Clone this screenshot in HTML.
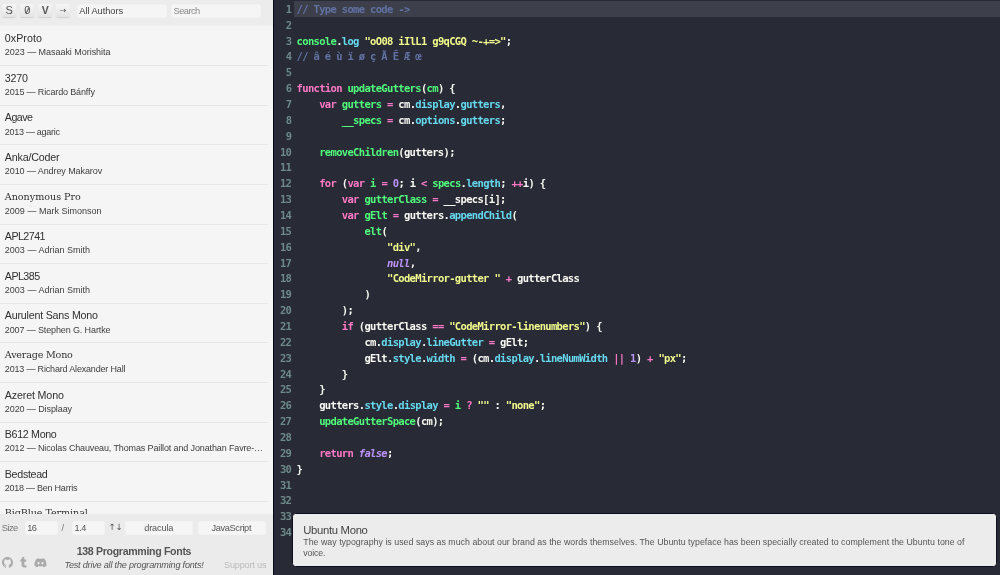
<!DOCTYPE html>
<html lang="en"><head><meta charset="utf-8"><title>138 Programming Fonts</title>
<style>
*{box-sizing:border-box;margin:0;padding:0}
html,body{width:1000px;height:575px;overflow:hidden;background:#282a36;font-family:"Liberation Sans",sans-serif;color:#3a3a3a}
#side{position:absolute;left:0;top:0;width:273px;height:575px;background:#f5f5f5;overflow:hidden}
#top{position:absolute;left:0;top:0;width:273px;height:27px;background:linear-gradient(#ececec 24.2px,#f5f5f5 27px);z-index:2}
.btn{position:absolute;top:4.3px;height:13px;width:14.4px;background:linear-gradient(#f6f6f6,#e4e4e4);border-radius:2px;box-shadow:0 1px 1px rgba(0,0,0,.12);font-size:11px;line-height:13px;text-align:center;color:#555}
.btn.arr{font-family:"DejaVu Sans",sans-serif;font-size:8px;line-height:14.4px}
.inp{position:absolute;top:4px;height:14.2px;background:#f5f5f5;border-radius:1.5px;font-size:9.3px;line-height:14px;padding-left:2.8px;color:#444;box-shadow:inset 0 0 1px rgba(0,0,0,.12)}
#list{position:absolute;left:0;top:26.5px;width:268px;list-style:none}
#list li{height:39.61px;border-bottom:1px solid #e6e6e6;padding:4.6px 0 0 4.8px;white-space:nowrap;overflow:hidden;text-overflow:ellipsis}
#list b{display:block;font-weight:normal;font-size:10.7px;line-height:14px;color:#303030}
#list i{display:block;font-style:normal;font-size:9px;line-height:12px;margin-top:1.3px;color:#3e3e3e;overflow:hidden;text-overflow:ellipsis;width:262px}
#foot{position:absolute;left:0;top:514.3px;width:273px;height:61px;background:#ebebeb;box-shadow:0 -.5px 1.5px rgba(0,0,0,.05)}
#ed{position:absolute;left:273px;top:0;width:727px;height:575px;background:linear-gradient(90deg,#07071b 1.2px,#282a36 1.2px);padding:1px 0 0 1.2px}
.ln{position:relative;height:15.86px;width:727px}
.ln.act:before{content:"";position:absolute;left:20px;right:0;top:0;bottom:0;background:rgba(255,255,255,.1)}
.no{position:absolute;left:0;top:.8px;width:17.1px;text-align:right;font-family:"DejaVu Sans Mono","Liberation Mono",monospace;font-size:10.5px;letter-spacing:-.67px;line-height:15.84px;color:#6d8a88;font-weight:bold}
pre{position:absolute;left:22.4px;top:.8px;font-family:"DejaVu Sans Mono","Liberation Mono",monospace;font-size:10.5px;letter-spacing:-.67px;line-height:15.84px;color:#f8f8f2;font-weight:bold}
.c{color:#6272a4}.k,.o{color:#ff79c6}.d{color:#50fa7b}.p{color:#66d9ef}.s{color:#f1fa8c}.n{color:#bd93f9}.a{color:#bd93f9;font-style:italic}
#tip{position:absolute;left:291.6px;top:513px;width:705.3px;height:54px;background:#ececec;border:1.4px solid #0d0f1e;border-radius:3.5px;padding:10.2px 0 0 10.7px}
#tip h4{font-weight:normal;font-size:11.3px;line-height:13px;color:#444}
#tip p{font-size:8.8px;line-height:11.1px;color:#555;width:675px;margin-top:-.2px}

.lbl{position:absolute;top:7px;font-size:9.4px;line-height:14px;color:#777}
.fin{position:absolute;top:6.8px;height:14.2px;background:#f5f5f5;border-radius:1.5px;font-size:9.2px;line-height:14.2px;text-align:center;color:#555;box-shadow:inset 0 0 1px rgba(0,0,0,.1)}
.ic{position:absolute;fill:#aaa}
#ttl{position:absolute;left:76.7px;white-space:nowrap;top:29.6px;font-weight:bold;font-size:10.6px;line-height:14px;color:#555}
#sub{position:absolute;left:64.4px;white-space:nowrap;top:44.6px;font-style:italic;font-size:9.1px;line-height:12px;color:#555}
#sup{position:absolute;left:224px;white-space:nowrap;top:44.9px;font-size:9.2px;line-height:12px;color:#bbb}
.btn.zero:after{content:"";position:absolute;left:6.8px;top:3.2px;width:.8px;height:7px;background:#555;transform:rotate(28deg)}
#list b.sf{font-family:"DejaVu Serif",serif;font-size:9.6px}
#wrap{position:absolute;left:0;top:0;width:1000px;height:575px;will-change:transform;background:#282a36}
</style></head><body><div id="wrap">
<div id="side">
<div id="top">
<span class="btn" style="left:2px">S</span><span class="btn zero" style="left:20px">0</span><span class="btn" style="left:38px;font-weight:bold;font-size:10.5px">V</span><span class="btn arr" style="left:56px">→</span>
<span class="inp" style="left:76.5px;width:90.2px"><span id="f_aa" style="letter-spacing:-0.065px">All Authors</span></span><span class="inp" style="left:170.7px;width:90px;color:#8a8a8a"><span id="f_se" style="letter-spacing:-0.55px">Search</span></span>
</div>
<ul id="list">
<li><b><span id="t0" style="letter-spacing:0.043px">0xProto</span></b><i><span id="s0" style="letter-spacing:-0.037px">2023 — Masaaki Morishita</span></i></li>
<li><b><span id="t1" style="letter-spacing:-0.227px">3270</span></b><i><span id="s1" style="letter-spacing:-0.14px">2015 — Ricardo Bánffy</span></i></li>
<li><b><span id="t2" style="letter-spacing:-0.55px">Agave</span></b><i><span id="s2" style="letter-spacing:-0.279px">2013 — agaric</span></i></li>
<li><b><span id="t3" style="letter-spacing:-0.184px">Anka/Coder</span></b><i><span id="s3" style="letter-spacing:-0.083px">2010 — Andrey Makarov</span></i></li>
<li><b class="sf"><span id="t4" style="letter-spacing:-0.019px">Anonymous Pro</span></b><i><span id="s4" style="letter-spacing:0.013px">2009 — Mark Simonson</span></i></li>
<li><b><span id="t5" style="letter-spacing:-0.55px">APL2741</span></b><i><span id="s5" style="letter-spacing:0.013px">2003 — Adrian Smith</span></i></li>
<li><b><span id="t6" style="letter-spacing:-0.55px">APL385</span></b><i><span id="s6" style="letter-spacing:0.013px">2003 — Adrian Smith</span></i></li>
<li><b><span id="t7" style="letter-spacing:-0.214px">Aurulent Sans Mono</span></b><i><span id="s7" style="letter-spacing:-0.124px">2007 — Stephen G. Hartke</span></i></li>
<li><b class="sf"><span id="t8" style="letter-spacing:-0.207px">Average Mono</span></b><i><span id="s8" style="letter-spacing:-0.174px">2013 — Richard Alexander Hall</span></i></li>
<li><b><span id="t9" style="letter-spacing:-0.149px">Azeret Mono</span></b><i><span id="s9" style="letter-spacing:-0.089px">2020 — Displaay</span></i></li>
<li><b><span id="t10" style="letter-spacing:-0.334px">B612 Mono</span></b><i><span id="s10" style="letter-spacing:-0.13px">2012 — Nicolas Chauveau, Thomas Paillot and Jonathan Favre-Lamarine</span></i></li>
<li><b><span id="t11" style="letter-spacing:-0.31px">Bedstead</span></b><i><span id="s11" style="letter-spacing:-0.247px">2018 — Ben Harris</span></i></li>
<li><b class="sf"><span id="t12" style="letter-spacing:-0.083px">BigBlue Terminal</span></b><i><span id="s12" style="letter-spacing:0px">2014 — VileR</span></i></li>
</ul>
<div id="foot">
<span class="lbl" id="f_size" style="left:1.7px;letter-spacing:-0.55px">Size</span>
<span class="fin" style="left:24.5px;width:33px;text-align:left;padding-left:2.8px"><span id="f_16" style="letter-spacing:-0.55px">16</span></span>
<span class="lbl" style="left:61.5px">/</span>
<span class="fin" style="left:71.8px;width:33px;text-align:left;padding-left:2.8px"><span id="f_14" style="letter-spacing:-0.55px">1.4</span></span>
<span class="lbl" style="left:108.6px;top:6.2px;color:#555;font-family:'DejaVu Sans',sans-serif;font-size:8.6px;letter-spacing:-0.3px">↑↓</span>
<span class="fin" style="left:125px;width:68px;text-align:left;padding-left:19.2px"><span id="f_dr" style="letter-spacing:-0.14px">dracula</span></span>
<span class="fin" style="left:197.8px;width:68.7px;text-align:left;padding-left:13.6px"><span id="f_js" style="letter-spacing:-0.312px">JavaScript</span></span>
<svg class="ic" style="left:1.7px;top:43px" width="11" height="10.8" viewBox="0 0 16 15.7"><path d="M8 0C3.58 0 0 3.58 0 8c0 3.54 2.29 6.53 5.47 7.59.4.07.55-.17.55-.38 0-.19-.01-.82-.01-1.49-2.01.37-2.53-.49-2.69-.94-.09-.23-.48-.94-.82-1.13-.28-.15-.68-.52-.01-.53.63-.01 1.08.58 1.23.82.72 1.21 1.87.87 2.33.66.07-.52.28-.87.51-1.07-1.78-.2-3.64-.89-3.64-3.95 0-.87.31-1.59.82-2.15-.08-.2-.36-1.02.08-2.12 0 0 .67-.21 2.2.82.64-.18 1.32-.27 2-.27s1.36.09 2 .27c1.53-1.04 2.2-.82 2.2-.82.44 1.1.16 1.92.08 2.12.51.56.82 1.27.82 2.15 0 3.07-1.87 3.75-3.65 3.95.29.25.54.73.54 1.48 0 1.07-.01 1.93-.01 2.2 0 .21.15.46.55.38A8.01 8.01 0 0 0 16 8c0-4.42-3.58-8-8-8z"/></svg>
<svg class="ic" style="left:19.6px;top:43.1px" width="7" height="10.6" viewBox="0 0 320 512"><path d="M310 480c-14 15-50 32-97 32-121 0-147-89-147-141V227H18c-6 0-10-4-10-10v-68c0-7 4-14 11-16 62-22 82-76 84-117 1-11 7-16 16-16h71c6 0 10 4 10 10v115h83c6 0 10 4 10 10v82c0 5-4 10-10 10h-83v133c0 34 24 54 68 36 5-2 9-3 13-2 3 1 6 3 7 8l22 64c2 5 3 11 0 14z"/></svg>
<svg class="ic" style="left:34px;top:43.6px" width="13" height="10.2" viewBox="0 0 640 500"><path d="M524 50A485 485 0 0 0 404 12a2 2 0 0 0-2 1 337 337 0 0 0-15 31 448 448 0 0 0-134 0 310 310 0 0 0-15-31 2 2 0 0 0-2-1A484 484 0 0 0 116 49a2 2 0 0 0-1 1C39 164 18 275 28 384a2 2 0 0 0 1 1 488 488 0 0 0 147 74 2 2 0 0 0 2-1 348 348 0 0 0 30-49 2 2 0 0 0-1-2 321 321 0 0 1-46-22 2 2 0 0 1 0-3l9-7a2 2 0 0 1 2 0c96 44 200 44 295 0a2 2 0 0 1 2 0l9 7a2 2 0 0 1 0 3 301 301 0 0 1-46 22 2 2 0 0 0-1 3 391 391 0 0 0 30 49 2 2 0 0 0 2 0 486 486 0 0 0 147-74 2 2 0 0 0 1-1c12-127-21-237-87-335zM222 318c-29 0-53-27-53-60s23-59 53-59 54 27 53 59c0 33-23 60-53 60zm196 0c-29 0-53-27-53-60s23-59 53-59 53 27 53 59c0 33-23 60-53 60z"/></svg>
<div id="ttl" style="letter-spacing:-0.323px">138 Programming Fonts</div>
<div id="sub" style="letter-spacing:-0.204px">Test drive all the programming fonts!</div>
<div id="sup" style="letter-spacing:-0.215px">Support us</div>
</div>
</div>
<div id="ed">
<div class="ln act"><span class="no">1</span><pre><span class="c">// Type some code -&gt;</span></pre></div>
<div class="ln"><span class="no">2</span><pre></pre></div>
<div class="ln"><span class="no">3</span><pre><span class="d">console</span>.<span class="p">log</span> <span class="s">"oO08 iIlL1 g9qCGQ ~-+=&gt;"</span>;</pre></div>
<div class="ln"><span class="no">4</span><pre><span class="c">// â é ù ï ø ç Ã Ē Æ œ</span></pre></div>
<div class="ln"><span class="no">5</span><pre></pre></div>
<div class="ln"><span class="no">6</span><pre><span class="k">function</span> <span class="d">updateGutters</span>(<span class="d">cm</span>) {</pre></div>
<div class="ln"><span class="no">7</span><pre>    <span class="k">var</span> <span class="d">gutters</span> <span class="o">=</span> cm.<span class="p">display</span>.<span class="p">gutters</span>,</pre></div>
<div class="ln"><span class="no">8</span><pre>        <span class="d">__specs</span> <span class="o">=</span> cm.<span class="p">options</span>.<span class="p">gutters</span>;</pre></div>
<div class="ln"><span class="no">9</span><pre></pre></div>
<div class="ln"><span class="no">10</span><pre>    <span class="d">removeChildren</span>(gutters);</pre></div>
<div class="ln"><span class="no">11</span><pre></pre></div>
<div class="ln"><span class="no">12</span><pre>    <span class="k">for</span> (<span class="k">var</span> <span class="d">i</span> <span class="o">=</span> <span class="n">0</span>; i <span class="o">&lt;</span> <span class="d">specs</span>.<span class="p">length</span>; <span class="o">++</span>i) {</pre></div>
<div class="ln"><span class="no">13</span><pre>        <span class="k">var</span> <span class="d">gutterClass</span> <span class="o">=</span> __specs[i];</pre></div>
<div class="ln"><span class="no">14</span><pre>        <span class="k">var</span> <span class="d">gElt</span> <span class="o">=</span> gutters.<span class="p">appendChild</span>(</pre></div>
<div class="ln"><span class="no">15</span><pre>            <span class="d">elt</span>(</pre></div>
<div class="ln"><span class="no">16</span><pre>                <span class="s">"div"</span>,</pre></div>
<div class="ln"><span class="no">17</span><pre>                <span class="a">null</span>,</pre></div>
<div class="ln"><span class="no">18</span><pre>                <span class="s">"CodeMirror-gutter "</span> <span class="o">+</span> gutterClass</pre></div>
<div class="ln"><span class="no">19</span><pre>            )</pre></div>
<div class="ln"><span class="no">20</span><pre>        );</pre></div>
<div class="ln"><span class="no">21</span><pre>        <span class="k">if</span> (gutterClass <span class="o">==</span> <span class="s">"CodeMirror-linenumbers"</span>) {</pre></div>
<div class="ln"><span class="no">22</span><pre>            cm.<span class="p">display</span>.<span class="p">lineGutter</span> <span class="o">=</span> gElt;</pre></div>
<div class="ln"><span class="no">23</span><pre>            gElt.<span class="p">style</span>.<span class="p">width</span> <span class="o">=</span> (cm.<span class="p">display</span>.<span class="p">lineNumWidth</span> <span class="o">||</span> <span class="n">1</span>) <span class="o">+</span> <span class="s">"px"</span>;</pre></div>
<div class="ln"><span class="no">24</span><pre>        }</pre></div>
<div class="ln"><span class="no">25</span><pre>    }</pre></div>
<div class="ln"><span class="no">26</span><pre>    gutters.<span class="p">style</span>.<span class="p">display</span> <span class="o">=</span> <span class="d">i</span> <span class="o">?</span> <span class="s">""</span> : <span class="s">"none"</span>;</pre></div>
<div class="ln"><span class="no">27</span><pre>    <span class="d">updateGutterSpace</span>(cm);</pre></div>
<div class="ln"><span class="no">28</span><pre></pre></div>
<div class="ln"><span class="no">29</span><pre>    <span class="k">return</span> <span class="a">false</span>;</pre></div>
<div class="ln"><span class="no">30</span><pre>}</pre></div>
<div class="ln"><span class="no">31</span><pre></pre></div>
<div class="ln"><span class="no">32</span><pre></pre></div>
<div class="ln"><span class="no">33</span><pre></pre></div>
<div class="ln"><span class="no">34</span><pre></pre></div>
</div>
<div id="tip"><h4><span id="f_um" style="letter-spacing:-0.323px">Ubuntu Mono</span></h4><p><span id="f_p1" style="letter-spacing:0.023px">The way typography is used says as much about our brand as the words themselves. The Ubuntu typeface has been specially created to complement the Ubuntu tone of</span> <span id="f_p2" style="letter-spacing:-0.177px">voice.</span></p></div>
</div></body></html>
